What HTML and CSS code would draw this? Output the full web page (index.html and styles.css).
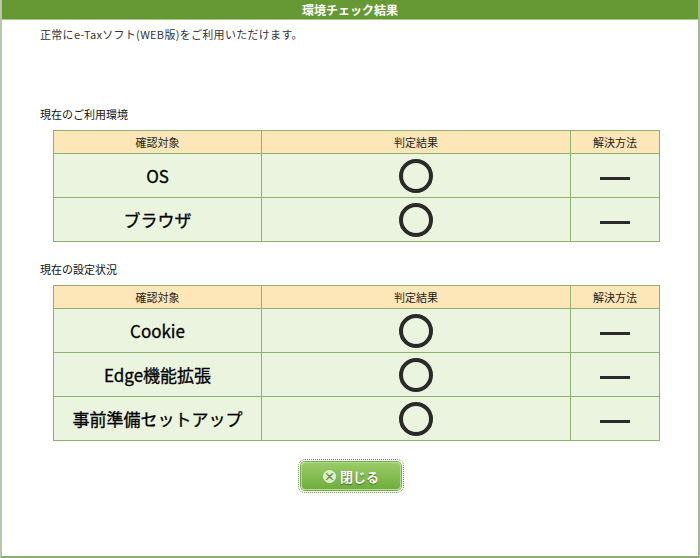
FILE: index.html
```html
<!DOCTYPE html>
<html lang="ja">
<head>
    <meta charset="UTF-8">
    <title>環境チェック結果</title>
    <link rel="stylesheet" href="styles.css">
</head>
<body>
    <div class="dialog">
        <div class="title-bar">環境チェック結果</div>
        <div class="content">
            <p class="message">正常にe-Taxソフト(WEB版)をご利用いただけます。</p>

            <h3 class="section-label first">現在のご利用環境</h3>
            <table class="check-table">
                <tr>
                    <th class="col-target">確認対象</th>
                    <th class="col-result">判定結果</th>
                    <th class="col-fix">解決方法</th>
                </tr>
                <tr>
                    <td class="name">OS</td>
                    <td><span class="ok"></span></td>
                    <td><span class="dash"></span></td>
                </tr>
                <tr>
                    <td class="name">ブラウザ</td>
                    <td><span class="ok"></span></td>
                    <td><span class="dash"></span></td>
                </tr>
            </table>

            <h3 class="section-label">現在の設定状況</h3>
            <table class="check-table">
                <tr>
                    <th class="col-target">確認対象</th>
                    <th class="col-result">判定結果</th>
                    <th class="col-fix">解決方法</th>
                </tr>
                <tr>
                    <td class="name">Cookie</td>
                    <td><span class="ok"></span></td>
                    <td><span class="dash"></span></td>
                </tr>
                <tr>
                    <td class="name">Edge機能拡張</td>
                    <td><span class="ok"></span></td>
                    <td><span class="dash"></span></td>
                </tr>
                <tr>
                    <td class="name">事前準備セットアップ</td>
                    <td><span class="ok"></span></td>
                    <td><span class="dash"></span></td>
                </tr>
            </table>

            <div class="actions">
                <button class="close-btn"><span class="x-icon">×</span>閉じる</button>
            </div>
        </div>
    </div>
</body>
</html>
```

FILE: styles.css
```css
body {
    margin: 0;
    font-family: "Noto Sans CJK JP", "Liberation Sans", sans-serif;
    background-color: #ffffff;
    color: #222;
}
.dialog {
    width: 700px;
    height: 558px;
    box-sizing: border-box;
    border-left: 2px solid #b9c8ac;
    border-right: 2px solid #9fb98a;
    border-bottom: 2px solid #8fae72;
    background: #fff;
}
.title-bar {
    height: 19px;
    line-height: 19px;
    background-color: #669933;
    border-bottom: 1px solid #a9cc86;
    color: #fff;
    font-size: 12px;
    font-weight: bold;
    text-align: center;
}
.content {
    padding: 0 0 0 38px;
}
.message {
    margin: 6px 0 0 0;
    font-size: 11px;
    line-height: 16px;
    letter-spacing: 0.3px;
    color: #333;
}
.section-label {
    margin: 20px 0 9px 0;
    font-size: 11px;
    font-weight: normal;
    line-height: 14px;
    color: #111;
}
.section-label.first {
    margin-top: 65px;
}
.check-table {
    margin-left: 13px;
    width: 607px;
    border-collapse: collapse;
    table-layout: fixed;
}
.check-table th,
.check-table td {
    border: 1px solid #8fb170;
    text-align: center;
    padding: 0;
}
.check-table th {
    height: 22px;
    background-color: #fde6b7;
    font-size: 11px;
    font-weight: normal;
    color: #222;
}
.check-table td {
    height: 43px;
    background-color: #eaf4df;
}
.col-target {
    width: 207px;
}
.col-result {
    width: 308px;
}
.col-fix {
    width: 88px;
}
.name {
    font-size: 17px;
    font-weight: normal;
    color: #000;
    -webkit-text-stroke: 0.3px #000;
}
.ok {
    display: inline-block;
    width: 26px;
    height: 26px;
    border: 4px solid #2a2a2a;
    border-radius: 50%;
    vertical-align: middle;
}
.dash {
    display: inline-block;
    width: 30px;
    height: 3px;
    background: #2a2a2a;
    vertical-align: middle;
}
.actions {
    display: flex;
    justify-content: center;
    margin: 21px 0 0 -36px;
}
.close-btn {
    display: flex;
    align-items: center;
    justify-content: center;
    width: 100px;
    height: 28px;
    border: 1px solid #b7dc8f;
    border-radius: 4px;
    outline: 1px dotted #6f8f52;
    outline-offset: 2px;
    background: linear-gradient(#9acb68, #6fae3d);
    box-shadow: 0 0 0 1px #7aab4b;
    color: #fff;
    font-family: "Noto Sans CJK JP", sans-serif;
    font-size: 13px;
    font-weight: bold;
    text-shadow: 0 1px 1px #3e6b1c;
}
.x-icon {
    display: inline-flex;
    align-items: center;
    justify-content: center;
    width: 11px;
    height: 11px;
    margin-right: 4px;
    border: 1px solid #eaf4df;
    border-radius: 50%;
    background: #d9ecc6;
    color: #5a8c33;
    font-size: 11px;
    line-height: 1;
    text-shadow: none;
}
```
